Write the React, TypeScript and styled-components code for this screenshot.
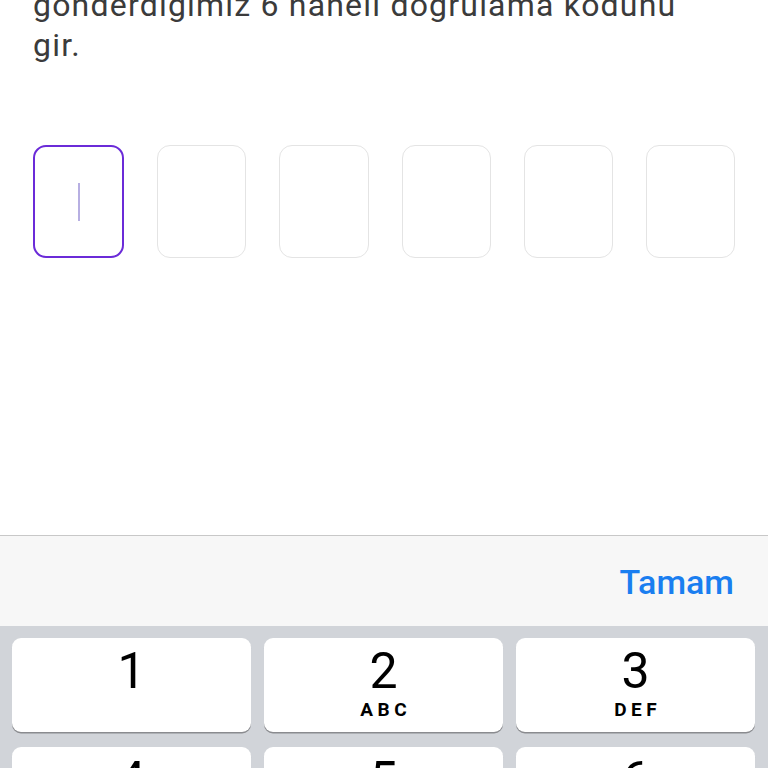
import React from 'react';
import styled, { createGlobalStyle } from 'styled-components';

const GlobalStyle = createGlobalStyle`
  html, body {
    margin: 0;
    padding: 0;
    height: 768px;
    overflow: hidden;
    background: #ffffff;
  }
  #root {
    height: 768px;
  }
`;

const Screen = styled.div`
  height: 768px;
  display: flex;
  flex-direction: column;
  font-family: Roboto, "Liberation Sans", sans-serif;
  overflow: hidden;
`;

const Content = styled.div`
  flex: 1;
  padding: 0 33px;
`;

const Prompt = styled.p`
  margin: -15px 0 0;
  max-width: 660px;
  font-size: 32px;
  line-height: 40px;
  letter-spacing: 1.2px;
  font-weight: 400;
  color: #3b3b3b;
`;

const CodeRow = styled.div`
  display: flex;
  gap: 33px;
  margin-top: 80px;
`;

const CodeBox = styled.div<{ active?: boolean }>`
  flex: 1;
  height: 113px;
  box-sizing: border-box;
  border-radius: 13px;
  border: ${(p) => (p.active ? '2px solid #6b2bd8' : '1.5px solid #e4e4e4')};
  display: flex;
  align-items: center;
  justify-content: center;
`;

const Caret = styled.span`
  width: 2px;
  height: 38px;
  background: #b7afe2;
`;

const Toolbar = styled.div`
  height: 90px;
  flex-shrink: 0;
  border-top: 1px solid #c8c8c8;
  background: #f7f7f7;
  display: flex;
  align-items: center;
  justify-content: flex-end;
  padding: 0 34px;
`;

const DoneButton = styled.button`
  border: none;
  background: none;
  padding: 0;
  font-family: Roboto, "Liberation Sans", sans-serif;
  font-size: 34px;
  font-weight: 500;
  color: #1a7ef0;
  margin-top: 2px;
`;

const Keyboard = styled.div`
  height: 142px;
  flex-shrink: 0;
  background: #d1d4d9;
  padding: 12px 13px 0 12px;
  display: grid;
  grid-template-columns: repeat(3, 1fr);
  grid-auto-rows: 94px;
  column-gap: 13px;
  row-gap: 15px;
  box-sizing: border-box;
  overflow: hidden;
`;

const Key = styled.div`
  background: #ffffff;
  border-radius: 9px;
  box-shadow: 0 1.5px 0 #8a8b8f;
  display: flex;
  flex-direction: column;
  align-items: center;
  padding-top: 6px;
  box-sizing: border-box;
`;

const Digit = styled.span`
  font-size: 50px;
  line-height: 54px;
  font-weight: 400;
  color: #000000;
`;

const Letters = styled.span`
  font-size: 19px;
  line-height: 20px;
  font-weight: 700;
  letter-spacing: 4.5px;
  margin-right: -4.5px;
  color: #000000;
  margin-top: 2px;
`;

const keys = [
  { digit: '1', letters: '' },
  { digit: '2', letters: 'ABC' },
  { digit: '3', letters: 'DEF' },
  { digit: '4', letters: 'GHI' },
  { digit: '5', letters: 'JKL' },
  { digit: '6', letters: 'MNO' },
];

export default function App() {
  return (
    <Screen>
      <GlobalStyle />
      <Content>
        <Prompt>gönderdiğimiz 6 haneli doğrulama kodunu gir.</Prompt>
        <CodeRow>
          {[0, 1, 2, 3, 4, 5].map((i) => (
            <CodeBox key={i} active={i === 0}>
              {i === 0 && <Caret />}
            </CodeBox>
          ))}
        </CodeRow>
      </Content>
      <Toolbar>
        <DoneButton>Tamam</DoneButton>
      </Toolbar>
      <Keyboard>
        {keys.map((k) => (
          <Key key={k.digit}>
            <Digit>{k.digit}</Digit>
            {k.letters && <Letters>{k.letters}</Letters>}
          </Key>
        ))}
      </Keyboard>
    </Screen>
  );
}
